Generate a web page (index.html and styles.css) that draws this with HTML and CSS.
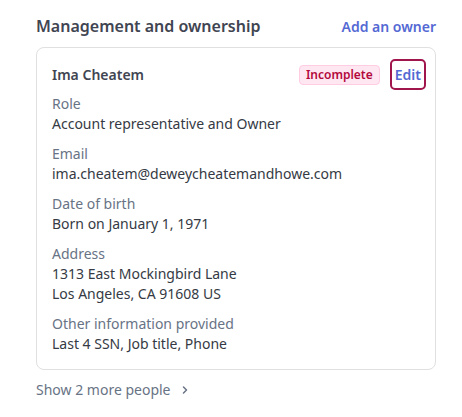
FILE: index.html
```html
<!doctype html>
<html lang="en">
  <head>
    <meta charset="UTF-8" />
    <meta name="viewport" content="width=device-width, initial-scale=1.0" />
    <title>Management and ownership</title>
    <link rel="stylesheet" href="styles.css">
  </head>
  <body>
    <section class="owners">
      <div class="owners-header">
        <h2>Management and ownership</h2>
        <a href="#" class="link">Add an owner</a>
      </div>

      <div class="person-card">
        <div class="person-top">
          <span class="person-name">Ima Cheatem</span>
          <div class="person-actions">
            <span class="badge">Incomplete</span>
            <button class="edit-btn">Edit</button>
          </div>
        </div>

        <div class="field">
          <div class="field-label">Role</div>
          <div class="field-value">Account representative and Owner</div>
        </div>
        <div class="field">
          <div class="field-label">Email</div>
          <div class="field-value">ima.cheatem@deweycheatemandhowe.com</div>
        </div>
        <div class="field">
          <div class="field-label">Date of birth</div>
          <div class="field-value">Born on January 1, 1971</div>
        </div>
        <div class="field">
          <div class="field-label">Address</div>
          <div class="field-value">1313 East Mockingbird Lane</div>
          <div class="field-value">Los Angeles, CA 91608 US</div>
        </div>
        <div class="field">
          <div class="field-label">Other information provided</div>
          <div class="field-value">Last 4 SSN, Job title, Phone</div>
        </div>
      </div>

      <a href="#" class="show-more">Show 2 more people
        <svg width="12" height="12" viewBox="0 0 12 12"><path d="M4.5 3l3 3-3 3" fill="none" stroke="currentColor" stroke-width="1.5" stroke-linecap="round" stroke-linejoin="round"/></svg>
      </a>
    </section>
  </body>
</html>
```

FILE: styles.css
```css
body {
  margin: 0;
  font-family: "Noto Sans", "Open Sans", sans-serif;
  font-size: 14px;
  color: #414552;
  background: #fff;
}
.owners {
  width: 400px;
  padding: 14px 26px 0 36px;
}
.owners-header {
  display: flex;
  justify-content: space-between;
  align-items: center;
  height: 24px;
  margin-bottom: 9px;
}
.owners-header h2 {
  margin: 0;
  font-size: 16px;
  font-weight: 600;
  color: #414552;
}
.link {
  color: #5469d4;
  font-weight: 600;
  text-decoration: none;
}
.person-card {
  border: 1px solid #e0e0e0;
  border-radius: 8px;
  padding: 11px 9px 15px 15px;
}
.person-top {
  display: flex;
  justify-content: space-between;
  align-items: center;
  margin-bottom: -6px;
}
.person-name {
  font-weight: 600;
  color: #414552;
}
.person-actions {
  display: flex;
  align-items: center;
  gap: 10px;
}
.badge {
  background: #ffe7f2;
  border: 1px solid #ffcce3;
  border-radius: 4px;
  color: #b3093c;
  font-size: 12px;
  font-weight: 600;
  padding: 1px 6px;
  line-height: 16px;
}
.edit-btn {
  font-family: inherit;
  font-size: 14px;
  font-weight: 600;
  color: #5469d4;
  background: #fff;
  border: 2px solid #a0164c;
  border-radius: 5px;
  padding: 3px 3px;
  line-height: 21px;
}
.field {
  margin-top: 10px;
  line-height: 20px;
}
.field-label {
  color: #687385;
}
.field-value {
  color: #353a44;
}
.show-more {
  display: inline-flex;
  align-items: center;
  gap: 8px;
  margin-top: 10px;
  color: #687385;
  text-decoration: none;
  line-height: 20px;
}
```
